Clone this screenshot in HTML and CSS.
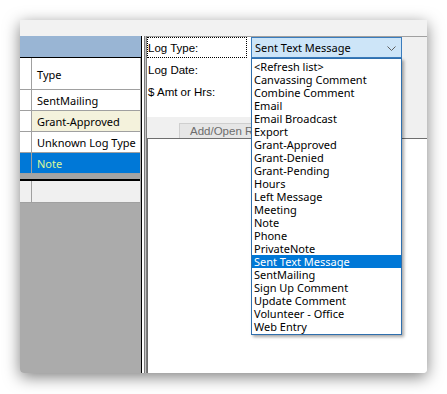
FILE: index.html
```html
<!DOCTYPE html>
<html lang="en">
<head>
    <meta charset="UTF-8">
    <title>Log Entry</title>
    <link rel="stylesheet" href="styles.css">
</head>
<body>
    <div class="stage">
        <div class="window">
            <div class="title-strip"></div>
            <div class="main">
                <div class="grid-pane">
                    <div class="band"></div>
                    <div class="grid">
                        <div class="row head"><span class="sel"></span><span class="cell">Type</span></div>
                        <div class="row"><span class="sel"></span><span class="cell">SentMailing</span></div>
                        <div class="row beige"><span class="sel"></span><span class="cell">Grant-Approved</span></div>
                        <div class="row"><span class="sel"></span><span class="cell">Unknown Log Type</span></div>
                        <div class="row current"><span class="sel"></span><span class="cell">Note</span></div>
                    </div>
                    <div class="gap"></div>
                    <div class="grid new-row">
                        <div class="row"><span class="sel"></span><span class="cell"></span></div>
                    </div>
                </div>
                <div class="splitter"></div>
                <div class="detail">
                    <div class="top">
                        <div class="form">
                            <div class="label focus">Log Type:</div>
                            <div class="combo">
                                <span>Sent Text Message</span>
                                <svg class="chevron" width="9" height="5" viewBox="0 0 9 5">
                                    <polyline points="0.5,0.5 4.5,4.5 8.5,0.5" fill="none" stroke="#5f5f5f" stroke-width="1"/>
                                </svg>
                                <ul class="droplist">
                                    <li>&lt;Refresh list&gt;</li>
                                    <li>Canvassing Comment</li>
                                    <li>Combine Comment</li>
                                    <li>Email</li>
                                    <li>Email Broadcast</li>
                                    <li>Export</li>
                                    <li>Grant-Approved</li>
                                    <li>Grant-Denied</li>
                                    <li>Grant-Pending</li>
                                    <li>Hours</li>
                                    <li>Left Message</li>
                                    <li>Meeting</li>
                                    <li>Note</li>
                                    <li>Phone</li>
                                    <li>PrivateNote</li>
                                    <li class="picked">Sent Text Message</li>
                                    <li>SentMailing</li>
                                    <li>Sign Up Comment</li>
                                    <li>Update Comment</li>
                                    <li>Volunteer - Office</li>
                                    <li>Web Entry</li>
                                </ul>
                            </div>
                            <div class="label">Log Date:</div>
                            <div></div>
                            <div class="label">$ Amt or Hrs:</div>
                            <div></div>
                        </div>
                    </div>
                    <div class="toolbar">
                        <button type="button" disabled>Add/Open Record</button>
                    </div>
                    <div class="records"></div>
                </div>
            </div>
        </div>
    </div>
</body>
</html>
```

FILE: styles.css
```css
body {
    margin: 0;
    background: #fff;
    font-family: 'Noto Sans', 'Open Sans', sans-serif;
    font-size: 11px;
    color: #000;
}
.stage {
    width: 447px;
    height: 394px;
    padding: 20px;
    box-sizing: border-box;
    overflow: hidden;
}
.window {
    width: 407px;
    height: 353px;
    display: flex;
    flex-direction: column;
    background: #f0f0f0;
    border-radius: 0 0 4px 4px;
    box-shadow: 0 4px 16px rgba(0, 0, 0, 0.5);
}
.title-strip {
    height: 16px;
    background: #f2f2f2;
}
.main {
    flex: 1;
    display: flex;
}

/* left grid */
.grid-pane {
    width: 121px;
    background: #ababab;
    border-bottom-left-radius: 4px;
    display: flex;
    flex-direction: column;
}
.band {
    height: 21px;
    background: #99b5d4;
    border-bottom: 1px solid #000;
}
.grid {
    background: #fff;
    margin-right: 1px;
}
.row {
    display: flex;
    height: 20px;
    border-bottom: 1px solid #a0a0a0;
}
.row.head {
    height: 31px;
}
.sel {
    width: 11px;
    border-right: 1px solid #a0a0a0;
}
.cell {
    flex: 1;
    padding: 1px 0 0 5px;
    line-height: 20px;
    white-space: nowrap;
    overflow: hidden;
}
.head .cell {
    line-height: 32px;
}
.beige .cell {
    background: #f4f2dc;
}
.current .sel,
.current .cell {
    background: #0078d7;
}
.current .cell {
    color: #dcf99a;
}
.gap {
    height: 5px;
    background: #a4a4a4;
}
.new-row {
    border-top: 2px solid #000;
}
.new-row .row {
    height: 21px;
    background: #f0f0f0;
}

.splitter {
    width: 6px;
    background: linear-gradient(to right, #000 0 1px, #fff 1px 3px, #7c7c7c 3px 4px, #c4c4c4 4px 5px, #7c7c7c 5px 6px);
}

/* right detail */
.detail {
    flex: 1;
    display: flex;
    flex-direction: column;
    border-top: 1px solid #a0a0a0;
}
.top {
    height: 80px;
}
.form {
    width: 255px;
    height: 80px;
    background: #fff;
    display: grid;
    grid-template-columns: 100px 151px;
    grid-template-rows: 21px 22px 22px;
    column-gap: 4px;
    align-content: start;
}
.label {
    font-family: 'Liberation Sans', Arial, sans-serif;
    font-size: 11.5px;
    color: #000;
    padding: 1px 0 0 1px;
    display: flex;
    align-items: center;
}
.label.focus {
    border: 1px dotted #000;
    padding-left: 0;
}
.combo {
    position: relative;
    box-sizing: border-box;
    border: 1px solid #3a7cbd;
    background: #cde5f8;
    display: flex;
    align-items: center;
    padding-left: 3px;
}
.chevron {
    position: absolute;
    right: 5px;
    top: 8px;
}
.droplist {
    position: absolute;
    top: 20px;
    left: -1px;
    width: 151px;
    box-sizing: border-box;
    margin: 0;
    padding: 1px 0;
    list-style: none;
    background: #fff;
    border: 1px solid #2f6fad;
    box-shadow: 2px 2px 3px rgba(0, 0, 0, 0.35);
    z-index: 2;
}
.droplist li {
    height: 13px;
    line-height: 14px;
    padding-left: 2px;
    white-space: nowrap;
}
.droplist li.picked {
    background: #0078d7;
    color: #fff;
}
.toolbar {
    height: 21px;
    display: flex;
    align-items: flex-end;
    padding-left: 32px;
}
button {
    height: 15px;
    width: 120px;
    padding: 0 0 0 10px;
    text-align: left;
    font-family: 'Liberation Sans', Arial, sans-serif;
    font-size: 11.5px;
    color: #6d6d6d;
    background: #e6e6e6;
    border: 1px solid #cfcfcf;
    border-bottom: none;
}
.records {
    flex: 1;
    background: #fff;
    border-top: 1px solid #6e6e6e;
    border-left: 1px solid #6e6e6e;
    border-bottom-right-radius: 4px;
}
```
